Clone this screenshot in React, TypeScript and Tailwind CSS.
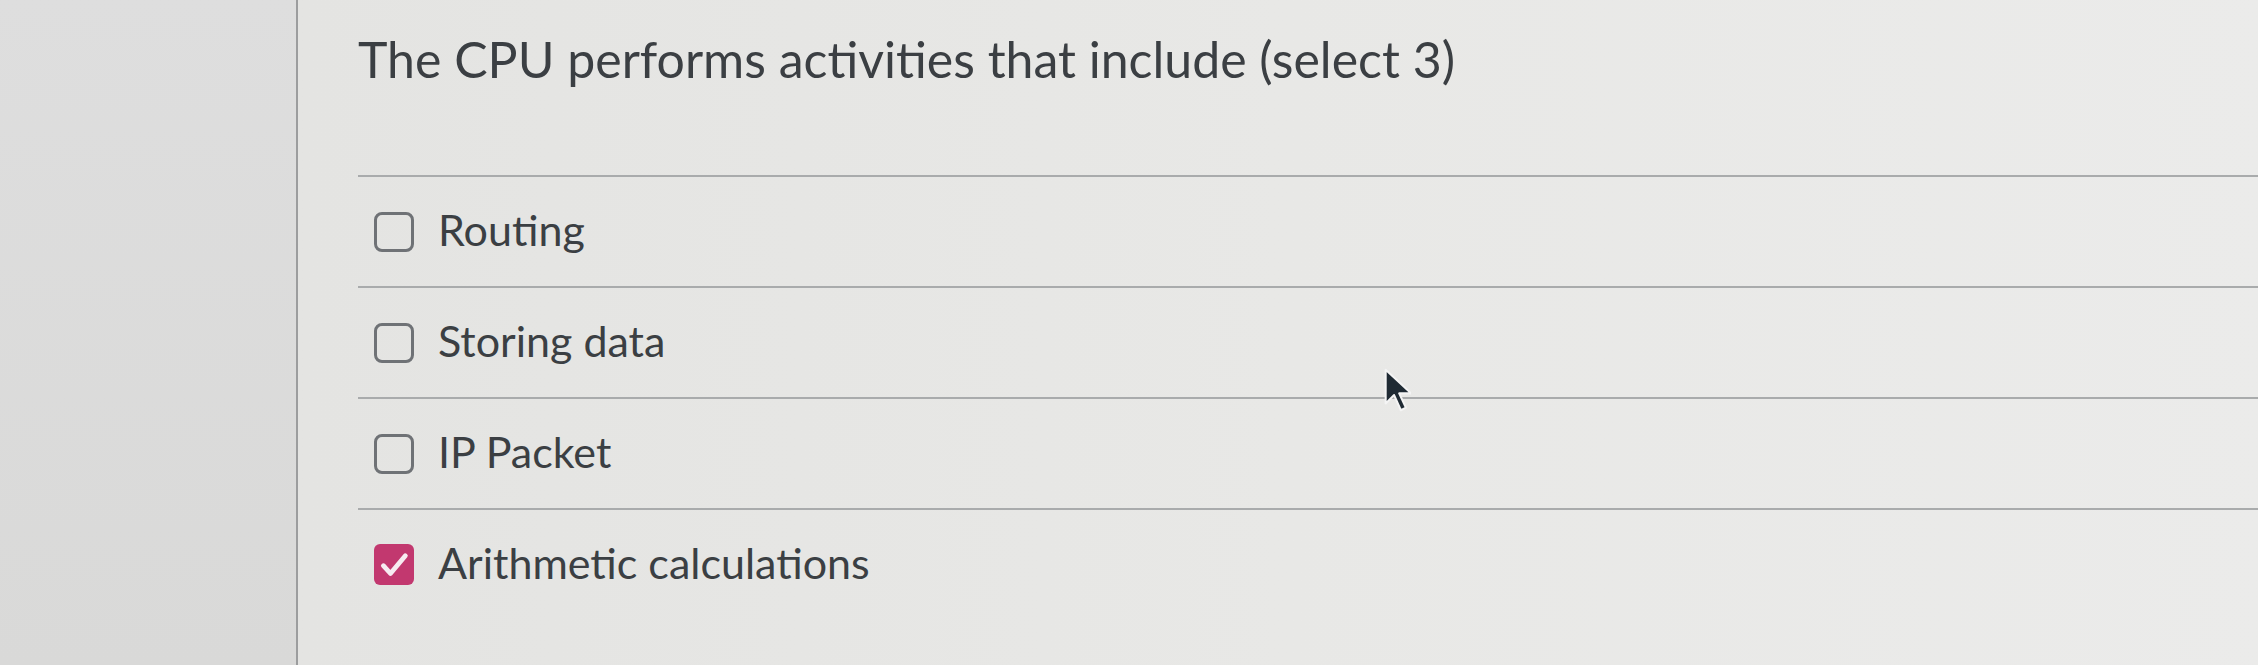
import { useState } from 'react';

const options = [
  { label: 'Routing', checked: false },
  { label: 'Storing data', checked: false },
  { label: 'IP Packet', checked: false },
  { label: 'Arithmetic calculations', checked: true },
];

function Box({ checked, onClick }: { checked: boolean; onClick: () => void }) {
  if (checked) {
    return (
      <button
        onClick={onClick}
        className="w-[40px] h-[41px] shrink-0 rounded-[6px] bg-[#c2386f] flex items-center justify-center"
      >
        <svg viewBox="0 0 24 24" className="w-[34px] h-[34px]" fill="none" stroke="#f7ebf1" strokeWidth={3.4} strokeLinecap="round" strokeLinejoin="round">
          <path d="M4.5 12.5l5 5.5L20 5.5" />
        </svg>
      </button>
    );
  }
  return (
    <button
      onClick={onClick}
      className="w-[40px] h-[40px] shrink-0 rounded-[8px] border-[3px] border-[#6f7276] bg-transparent"
    />
  );
}

export default function App() {
  const [values, setValues] = useState(options.map((o) => o.checked));

  const toggle = (i: number) => {
    setValues(values.map((v, j) => (j === i ? !v : v)));
  };

  return (
    <div className="relative flex min-h-[665px] w-full overflow-hidden font-['Lato','Liberation_Sans',sans-serif] text-[#3b3f43]">
      <div className="w-[298px] shrink-0 bg-gradient-to-b from-[#dedede] to-[#d9d9d8] border-r-[2px] border-[#9c9d9e]" />

      <div className="flex-1 bg-gradient-to-r from-[#e4e4e2] via-[#e8e8e6] to-[#ebebea] pl-[60px]">
        <h1 className="pt-[29px] text-[50px] leading-[1.2] font-normal">
          The CPU performs activities that include (select 3)
        </h1>

        <div className="mt-[86px]">
          {options.map((o, i) => (
            <div
              key={o.label}
              className="flex items-center gap-[24px] pl-[16px] h-[111px] border-t-[2px] border-[#a9abac]"
            >
              <Box checked={values[i]} onClick={() => toggle(i)} />
              <span className="text-[43px] leading-none pb-[4px]">{o.label}</span>
            </div>
          ))}
        </div>
      </div>

      {/* mouse pointer */}
      <svg
        viewBox="0 0 16 26"
        className="absolute left-[1384px] top-[368px] w-[27px] h-[44px]"
      >
        <path d="M1 1v20l5-5 4 9 3-1.5-4-8.5h7z" fill="#1f2a33" stroke="#f4f4f4" strokeWidth={1.2} strokeLinejoin="round" />
      </svg>
    </div>
  );
}
